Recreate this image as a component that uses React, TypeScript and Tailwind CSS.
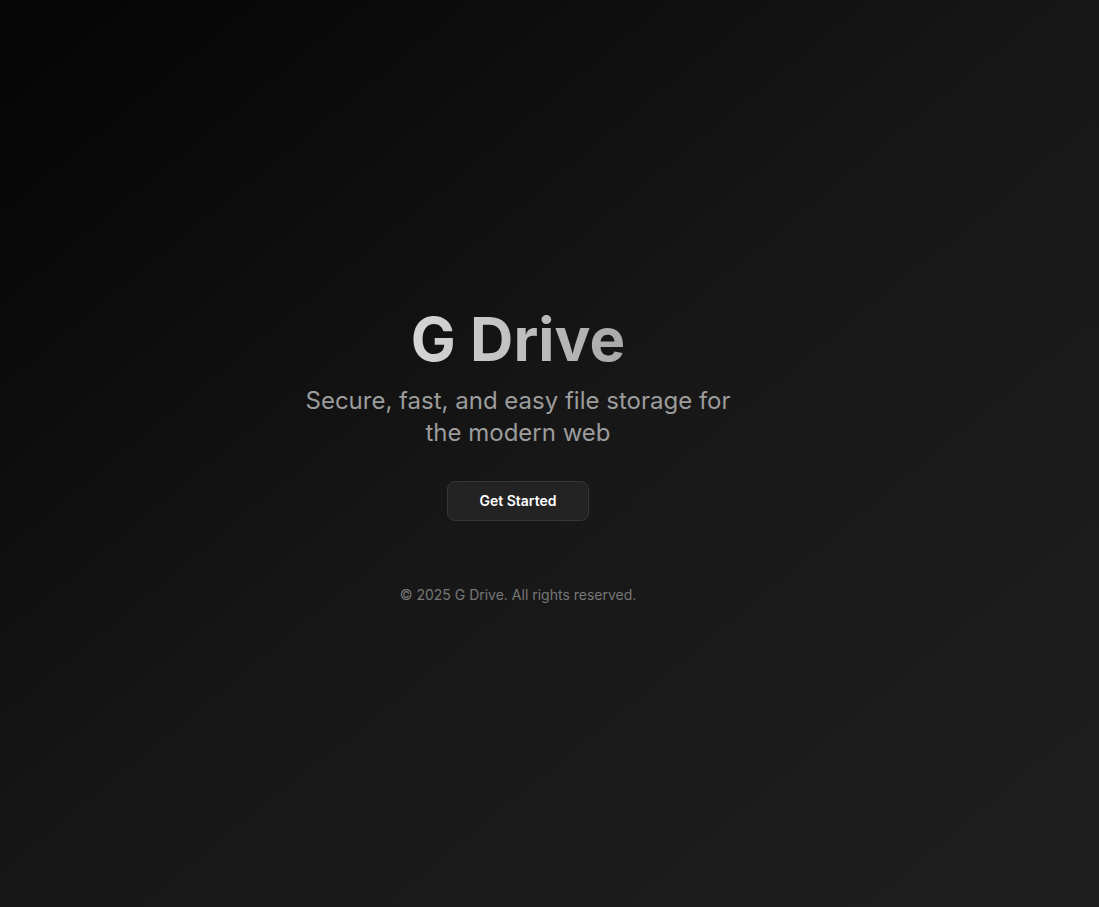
const App = () => {
  return (
    <main
      className="min-h-screen w-full flex flex-col items-center justify-center bg-gradient-to-br from-[#050505] via-[#171717] to-[#1f1f1f] pl-0 pr-[63px] pt-[6px]"
      style={{ fontFamily: 'Inter, "Noto Sans", sans-serif' }}
    >
      <div className="flex flex-col items-center text-center">
        <h1 className="text-6xl font-bold leading-none mb-4 bg-gradient-to-r from-[#d6d6d6] to-[#a9a9a9] bg-clip-text text-transparent">
          G Drive
        </h1>
        <p className="text-2xl text-[#9c9c9c] max-w-md mb-8">
          Secure, fast, and easy file storage for the modern web
        </p>
        <button className="h-10 w-[142px] rounded-lg border border-[#363636] bg-[#232323] text-white text-sm font-semibold hover:bg-[#2a2a2a]">
          Get Started
        </button>
        <footer className="mt-16 text-sm text-[#777777]">
          © 2025 G Drive. All rights reserved.
        </footer>
      </div>
    </main>
  );
};

export default App;
